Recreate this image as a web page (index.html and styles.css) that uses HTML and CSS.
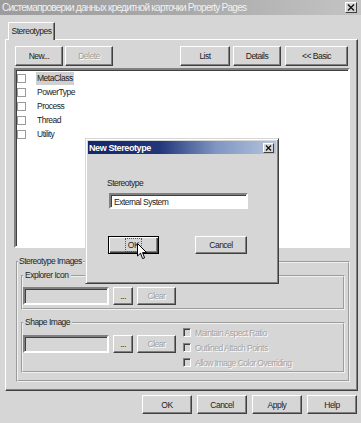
FILE: index.html
```html
<!DOCTYPE html>
<html lang="ru">
<head>
  <meta charset="UTF-8" />
  <title>Property Pages</title>
  <link rel="stylesheet" href="styles.css">
</head>
<body>
  <div class="window">
    <div class="titlebar">
      <span class="title">Системапроверки данных кредитной карточки Property Pages</span>
      <span class="close"><svg width="8" height="7" viewBox="0 0 8 7"><path d="M1 0.5l6 6M7 0.5l-6 6" stroke="#111" stroke-width="1.4"/></svg></span>
    </div>

    <div class="tabs"><div class="tab">Stereotypes</div></div>

    <div class="panel">
      <div class="toolbar">
        <button class="btn b-new">New...</button>
        <button class="btn b-del" disabled>Delete</button>
        <button class="btn b-list">List</button>
        <button class="btn b-details">Details</button>
        <button class="btn b-basic">&lt;&lt; Basic</button>
      </div>

      <ul class="list">
        <li class="selected"><span class="check"></span><span class="name">MetaClass</span></li>
        <li><span class="check"></span><span class="name">PowerType</span></li>
        <li><span class="check"></span><span class="name">Process</span></li>
        <li><span class="check"></span><span class="name">Thread</span></li>
        <li><span class="check"></span><span class="name">Utility</span></li>
      </ul>

      <fieldset class="group outer">
        <legend>Stereotype Images</legend>
        <fieldset class="group explorer">
          <legend>Explorer Icon</legend>
          <div class="row">
            <span class="field"></span>
            <button class="btn b-dots">...</button>
            <button class="btn b-clear" disabled>Clear</button>
          </div>
        </fieldset>
        <fieldset class="group shape">
          <legend>Shape Image</legend>
          <div class="row">
            <span class="field"></span>
            <button class="btn b-dots">...</button>
            <button class="btn b-clear" disabled>Clear</button>
            <div class="opts">
              <label class="opt"><span class="box"></span>Maintain Aspect Ratio</label>
              <label class="opt"><span class="box"></span>Outlined Attach Points</label>
              <label class="opt"><span class="box"></span>Allow Image Color Overriding</label>
            </div>
          </div>
        </fieldset>
      </fieldset>
    </div>

    <div class="footer">
      <button class="btn b-foot">OK</button>
      <button class="btn b-foot">Cancel</button>
      <button class="btn b-foot">Apply</button>
      <button class="btn b-foot">Help</button>
    </div>

    <div class="modal">
      <div class="modal-title">
        <span>New Stereotype</span>
        <span class="close small"><svg width="7" height="6" viewBox="0 0 7 6"><path d="M1 0.5l5 5M6 0.5l-5 5" stroke="#111" stroke-width="1.3"/></svg></span>
      </div>
      <div class="modal-body">
        <div class="m-label">Stereotype</div>
        <div class="m-input">External System</div>
        <div class="m-buttons">
          <button class="btn b-ok"><span class="focus">OK</span></button>
          <button class="btn b-cancel">Cancel</button>
        </div>
      </div>
    </div>

    <svg class="cursor" width="11" height="17" viewBox="0 0 11 17"><path d="M0.5 0.5L0.5 13L3.5 10.2L5.6 15.6L7.6 14.8L5.5 9.6L9.6 9.6Z" fill="#fff" stroke="#000" stroke-width="1"/></svg>
  </div>
</body>
</html>
```

FILE: styles.css
```css
* { box-sizing: border-box; }
body { margin: 0; font-family: "Liberation Sans", Arial, sans-serif; font-size: 8.5px; letter-spacing: -0.5px; color: #222; }

.window { position: relative; width: 361px; height: 423px; background: #d6d6d6; overflow: hidden; }

.titlebar {
  height: 15px;
  display: flex;
  align-items: center;
  justify-content: space-between;
  padding: 0 4px 0 2px;
  background: linear-gradient(to right, #9c9c9c, #ababab 55%, #c4c4c4);
}
.title { color: #f2f2f2; font-size: 10px; letter-spacing: -0.75px; }
.close {
  width: 12px; height: 11px;
  display: flex; align-items: center; justify-content: center;
  background: #d6d6d6;
  border: 1px solid; border-color: #fff #404040 #404040 #fff;
}
.close.small { width: 11px; height: 10px; }

.tabs { margin-top: 7px; padding-left: 8px; height: 17px; position: relative; z-index: 1; }
.tab {
  width: 47px; height: 18px;
  padding-top: 3px;
  text-align: center;
  background: #d6d6d6;
  border: 1px solid; border-bottom: none;
  border-color: #fff #404040 #fff #fff;
  box-shadow: inset -1px 0 #808080;
}

.panel {
  margin-left: 5px;
  width: 353px;
  height: 352px;
  border: 1px solid; border-color: #fff #404040 #404040 #fff;
  box-shadow: inset -1px -1px #808080;
}

.btn {
  font: inherit;
  letter-spacing: inherit;
  color: #222;
  height: 20px;
  padding: 0;
  background: #d6d6d6;
  border: 1px solid; border-color: #fff #404040 #404040 #fff;
  box-shadow: inset -1px -1px #808080;
}
.btn:disabled { color: #a0a0a0; text-shadow: 1px 1px #fff; }

.toolbar { display: flex; padding: 6px 9px 0 9px; }
.b-new { width: 48px; }
.b-del { width: 48px; margin-left: 2px; }
.b-list { width: 50px; margin-left: auto; }
.b-details { width: 48px; margin-left: 3px; }
.b-basic { width: 63px; margin-left: 4px; }

.list {
  list-style: none;
  margin: 2px 0 0 8px;
  padding: 1px 0 0 1px;
  width: 336px;
  height: 180px;
  background: #fff;
  border: 2px solid; border-color: #808080 #fff #fff #808080;
  box-shadow: inset 1px 1px #404040;
}
.list li { display: flex; align-items: center; height: 14px; }
.check {
  width: 9px; height: 9px;
  border: 1px solid #9a9a9a;
  background: #fff;
  margin-right: 10px;
}
.name { padding: 1px 1px; line-height: 11px; }
.selected .name { background: #d0d0d0; }

.group {
  margin: 0;
  padding: 0 0 3px 0;
  border: 2px groove #f0f0f0;
  min-inline-size: 0;
}
.group legend { padding: 0 2px; line-height: 13px; }

.outer { margin: 7px 0 0 10px; width: 334px; padding: 1px 3px 7px; }
.outer > legend { margin-left: -3px; padding: 0 1px; }

.row { display: flex; align-items: flex-start; }
.explorer .row { margin-top: 5px; }
.shape { margin-top: 6px; padding-bottom: 1px; }
.shape .row { margin-top: -4px; }
.shape .field, .shape .btn { margin-top: 10px; }

.field {
  width: 86px; height: 18px;
  background: #d6d6d6;
  border: 2px solid; border-color: #808080 #fff #fff #808080;
  box-shadow: inset 1px 1px #404040;
}
.b-dots { width: 20px; height: 18px; margin-left: 4px; }
.b-clear { width: 39px; height: 18px; margin-left: 4px; }

.opts { margin-left: 7px; display: flex; flex-direction: column; }
.opt { display: flex; align-items: center; height: 15px; color: #a4a4a4; text-shadow: 1px 1px #fff; }
.box {
  width: 8px; height: 9px;
  margin-right: 4px;
  background: #d6d6d6;
  border: 1px solid; border-color: #808080 #fff #fff #808080;
  box-shadow: inset 1px 1px #404040;
}

.footer { display: flex; justify-content: flex-end; gap: 5px; padding-right: 4px; margin-top: 4px; }
.b-foot { width: 50px; height: 19px; }

.modal {
  position: absolute;
  left: 85px; top: 138px;
  width: 194px; height: 146px;
  padding: 2px;
  background: #d6d6d6;
  border: 1px solid; border-color: #d6d6d6 #404040 #404040 #d6d6d6;
  box-shadow: inset 1px 1px #fff, inset -1px -1px #808080;
}
.modal-title {
  height: 13px;
  display: flex; align-items: center; justify-content: space-between;
  padding: 0 2px 0 1px;
  color: #fff;
  font-size: 9px;
  font-weight: bold;
  letter-spacing: -0.4px;
  background: linear-gradient(to right, #13266a, #22367a 38%, #7f96c2 68%, #b6c4dc);
}
.modal-body { padding: 24px 0 0 19px; }
.m-label { line-height: 11px; }
.m-input {
  margin: 4px 0 0 2px;
  width: 139px; height: 16px;
  padding: 2px 0 0 3px;
  background: #fff;
  border: 2px solid; border-color: #808080 #fff #fff #808080;
  box-shadow: inset 1px 1px #404040;
}
.m-buttons { display: flex; margin-top: 27px; }
.b-ok {
  width: 51px; height: 18px;
  margin-left: 1px;
  border: 1px solid #000;
  box-shadow: inset 1px 1px #fff, inset -1px -1px #404040, inset -2px -2px #808080;
}
.focus { outline: 1px dotted #555; outline-offset: 1px; padding: 0 1px; }
.b-cancel { width: 52px; height: 18px; margin-left: 36px; }

.cursor { position: absolute; left: 137px; top: 243px; }
```
